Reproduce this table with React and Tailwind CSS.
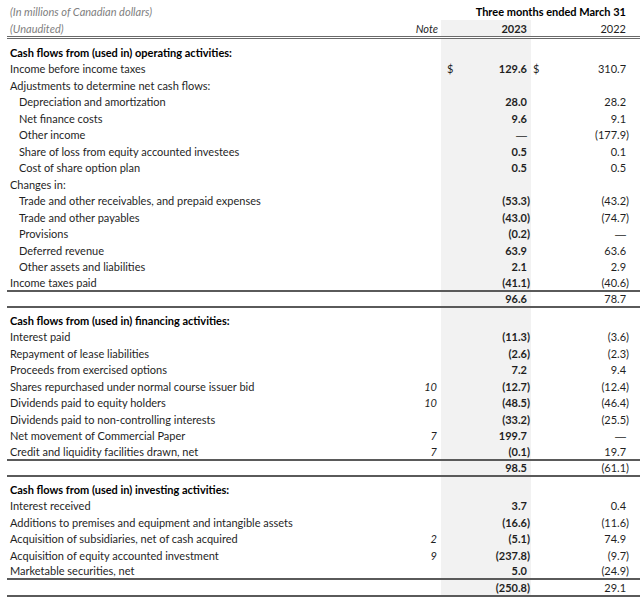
import React from 'react';

const operating = [
  { label: 'Income before income taxes', dollar: true, a: '129.6', b: '310.7' },
  { label: 'Adjustments to determine net cash flows:' },
  { label: 'Depreciation and amortization', indent: true, a: '28.0', b: '28.2' },
  { label: 'Net finance costs', indent: true, a: '9.6', b: '9.1' },
  { label: 'Other income', indent: true, a: '—', b: '(177.9)' },
  { label: 'Share of loss from equity accounted investees', indent: true, a: '0.5', b: '0.1' },
  { label: 'Cost of share option plan', indent: true, a: '0.5', b: '0.5' },
  { label: 'Changes in:' },
  { label: 'Trade and other receivables, and prepaid expenses', indent: true, a: '(53.3)', b: '(43.2)' },
  { label: 'Trade and other payables', indent: true, a: '(43.0)', b: '(74.7)' },
  { label: 'Provisions', indent: true, a: '(0.2)', b: '—' },
  { label: 'Deferred revenue', indent: true, a: '63.9', b: '63.6' },
  { label: 'Other assets and liabilities', indent: true, a: '2.1', b: '2.9' },
  { label: 'Income taxes paid', a: '(41.1)', b: '(40.6)', line: true },
  { a: '96.6', b: '78.7', line: true },
];

const financing = [
  { label: 'Interest paid', a: '(11.3)', b: '(3.6)' },
  { label: 'Repayment of lease liabilities', a: '(2.6)', b: '(2.3)' },
  { label: 'Proceeds from exercised options', a: '7.2', b: '9.4' },
  { label: 'Shares repurchased under normal course issuer bid', note: '10', a: '(12.7)', b: '(12.4)' },
  { label: 'Dividends paid to equity holders', note: '10', a: '(48.5)', b: '(46.4)' },
  { label: 'Dividends paid to non-controlling interests', a: '(33.2)', b: '(25.5)' },
  { label: 'Net movement of Commercial Paper', note: '7', a: '199.7', b: '—' },
  { label: 'Credit and liquidity facilities drawn, net', note: '7', a: '(0.1)', b: '19.7', line: true },
  { a: '98.5', b: '(61.1)', line: true },
];

const investing = [
  { label: 'Interest received', a: '3.7', b: '0.4' },
  { label: 'Additions to premises and equipment and intangible assets', a: '(16.6)', b: '(11.6)' },
  { label: 'Acquisition of subsidiaries, net of cash acquired', note: '2', a: '(5.1)', b: '74.9' },
  { label: 'Acquisition of equity accounted investment', note: '9', a: '(237.8)', b: '(9.7)' },
  { label: 'Marketable securities, net', a: '5.0', b: '(24.9)', line: true },
  { a: '(250.8)', b: '29.1', line: true },
];

const grid = 'grid grid-cols-[393px_41px_90px_99px]';

// numbers without a closing paren keep its width so the decimals line up
const Num = ({ v }) => {
  if (!v) return null;
  if (v === '—') {
    return (
      <>
        <span className="font-['Liberation_Sans',sans-serif] font-normal">—</span>
        <span className="invisible">)</span>
      </>
    );
  }
  if (v.endsWith(')')) return v;
  return (
    <>
      {v}
      <span className="invisible">)</span>
    </>
  );
};

const Row = ({ label, indent, note, dollar, a, b, line, bold }) => (
  <div className={`${grid} h-[16.5px] ${line ? 'border-b-2 border-[#5a5a5a]' : ''}`}>
    <div className={`${indent ? 'pl-[12px]' : 'pl-[3px]'} ${bold ? 'font-bold text-black' : ''} flex items-center whitespace-nowrap`}>
      {label}
    </div>
    <div className="flex items-center justify-end pr-[4px] italic">{note}</div>
    <div className="bg-[#f2f2f2] flex items-center justify-between pl-[6px] pr-[1px] font-bold">
      <span className="font-normal">{dollar ? '$' : ''}</span>
      <span>
        <Num v={a} />
      </span>
    </div>
    <div className="flex items-center justify-between pl-[2px] pr-[1px]">
      <span>{dollar ? '$' : ''}</span>
      <span>
        <Num v={b} />
      </span>
    </div>
  </div>
);

const Spacer = ({ h }) => (
  <div className={`${grid} ${h}`}>
    <div />
    <div />
    <div className="bg-[#f2f2f2]" />
    <div />
  </div>
);

const Section = ({ title, rows }) => (
  <>
    <Row label={title} bold />
    {rows.map((r, i) => (
      <Row key={i} {...r} />
    ))}
  </>
);

export default function App() {
  return (
    <div className="w-[640px] h-[597px] bg-white overflow-hidden pt-[3px] pl-[7px] text-[11px] leading-none text-[#1f1f1f] font-['Lato',sans-serif]">
      <div className={`${grid} h-[17px]`}>
        <div className="pl-[3px] flex items-center italic text-[#808080]">(In millions of Canadian dollars)</div>
        <div />
        <div className="col-span-2 flex items-center justify-end pr-[4px] font-bold text-black">
          Three months ended March 31
        </div>
      </div>
      <div className={`${grid} h-[19px] border-b-[3px] border-double border-[#6a6a6a]`}>
        <div className="pl-[3px] flex items-center italic text-[#808080]">(Unaudited)</div>
        <div className="flex items-center justify-end pr-[3px] italic">Note</div>
        <div className="bg-[#f2f2f2] flex items-center justify-end pr-[4px] font-bold">2023</div>
        <div className="flex items-center justify-end pr-[4px]">2022</div>
      </div>
      <Spacer h="h-[5px]" />
      <Section title="Cash flows from (used in) operating activities:" rows={operating} />
      <Spacer h="h-[4px]" />
      <Section title="Cash flows from (used in) financing activities:" rows={financing} />
      <Spacer h="h-[4px]" />
      <Section title="Cash flows from (used in) investing activities:" rows={investing} />
    </div>
  );
}
